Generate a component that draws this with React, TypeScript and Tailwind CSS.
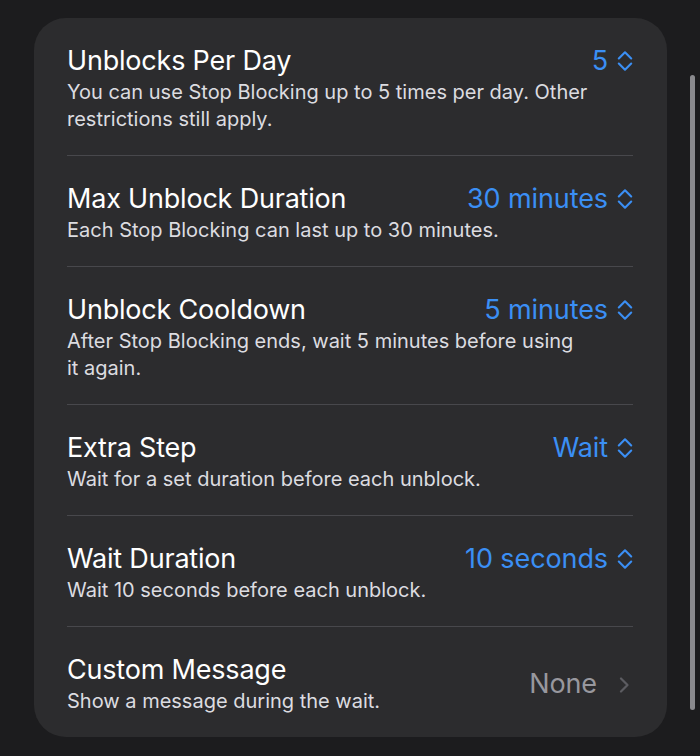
const font = { fontFamily: "Inter, 'Noto Sans', sans-serif" }

type Row = {
  title: string
  desc: string
  value: string
  kind: "picker" | "link"
}

const rows: Row[] = [
  { title: "Unblocks Per Day", desc: "You can use Stop Blocking up to 5 times per day. Other restrictions still apply.", value: "5", kind: "picker" },
  { title: "Max Unblock Duration", desc: "Each Stop Blocking can last up to 30 minutes.", value: "30 minutes", kind: "picker" },
  { title: "Unblock Cooldown", desc: "After Stop Blocking ends, wait 5 minutes before using it again.", value: "5 minutes", kind: "picker" },
  { title: "Extra Step", desc: "Wait for a set duration before each unblock.", value: "Wait", kind: "picker" },
  { title: "Wait Duration", desc: "Wait 10 seconds before each unblock.", value: "10 seconds", kind: "picker" },
  { title: "Custom Message", desc: "Show a message during the wait.", value: "None", kind: "link" },
]

function UpDown() {
  return (
    <svg width="16" height="24" viewBox="0 0 16 24" fill="none" stroke="#3b8ff4" strokeWidth="2.1" strokeLinecap="round" strokeLinejoin="round">
      <path d="M1.8 9.5 L8 3.3 L14.2 9.5" />
      <path d="M1.8 14.5 L8 20.7 L14.2 14.5" />
    </svg>
  )
}

function ChevronRight() {
  return (
    <svg width="12" height="16" viewBox="0 0 12 16" fill="none" stroke="#5c5c61" strokeWidth="2.2" strokeLinecap="round" strokeLinejoin="round">
      <path d="M3 1.5 L9.5 8 L3 14.5" />
    </svg>
  )
}

function Desc({ text }: { text: string }) {
  return <p className="max-w-[522px] text-[20px] leading-[27px] text-[#dcdce0] mt-[2px]">{text}</p>
}

function SettingRow({ row, last }: { row: Row; last: boolean }) {
  const border = last ? "" : "border-b border-[#48484c]"

  if (row.kind === "link") {
    return (
      <li className={`flex items-center justify-between gap-3 pt-[27px] pb-[22px] ${border}`}>
        <div className="min-w-0">
          <p className="text-[27px] leading-[32px] text-white tracking-[-0.2px]">{row.title}</p>
          <Desc text={row.desc} />
        </div>
        <div className="flex shrink-0 items-center gap-[21px] pr-[3px]">
          <span className="text-[27px] text-[#98989e] tracking-[-0.1px]">{row.value}</span>
          <ChevronRight />
        </div>
      </li>
    )
  }

  return (
    <li className={`pt-[27px] pb-[22px] ${border}`}>
      <div className="flex items-center justify-between gap-3 h-[32px]">
        <p className="text-[27px] leading-[32px] text-white tracking-[-0.2px]">{row.title}</p>
        <div className="flex shrink-0 items-center gap-[9px]">
          <span className="text-[27px] text-[#3b8ff4] tracking-[-0.1px]">{row.value}</span>
          <UpDown />
        </div>
      </div>
      <Desc text={row.desc} />
    </li>
  )
}

export default function App() {
  return (
    <div className="h-[756px] bg-[#1c1c1e] flex overflow-hidden" style={font}>
      <div className="pt-[18px] pl-[34px]">
        <ul className="w-[633px] bg-[#2c2c2e] rounded-[32px] pl-[33px] pr-[34px]">
          {rows.map((row, i) => (
            <SettingRow key={row.title} row={row} last={i === rows.length - 1} />
          ))}
        </ul>
      </div>
      <div className="ml-[23px] pt-[75px]">
        <div className="w-[5px] h-[635px] rounded-full bg-[#8a8a8e]" />
      </div>
    </div>
  )
}
